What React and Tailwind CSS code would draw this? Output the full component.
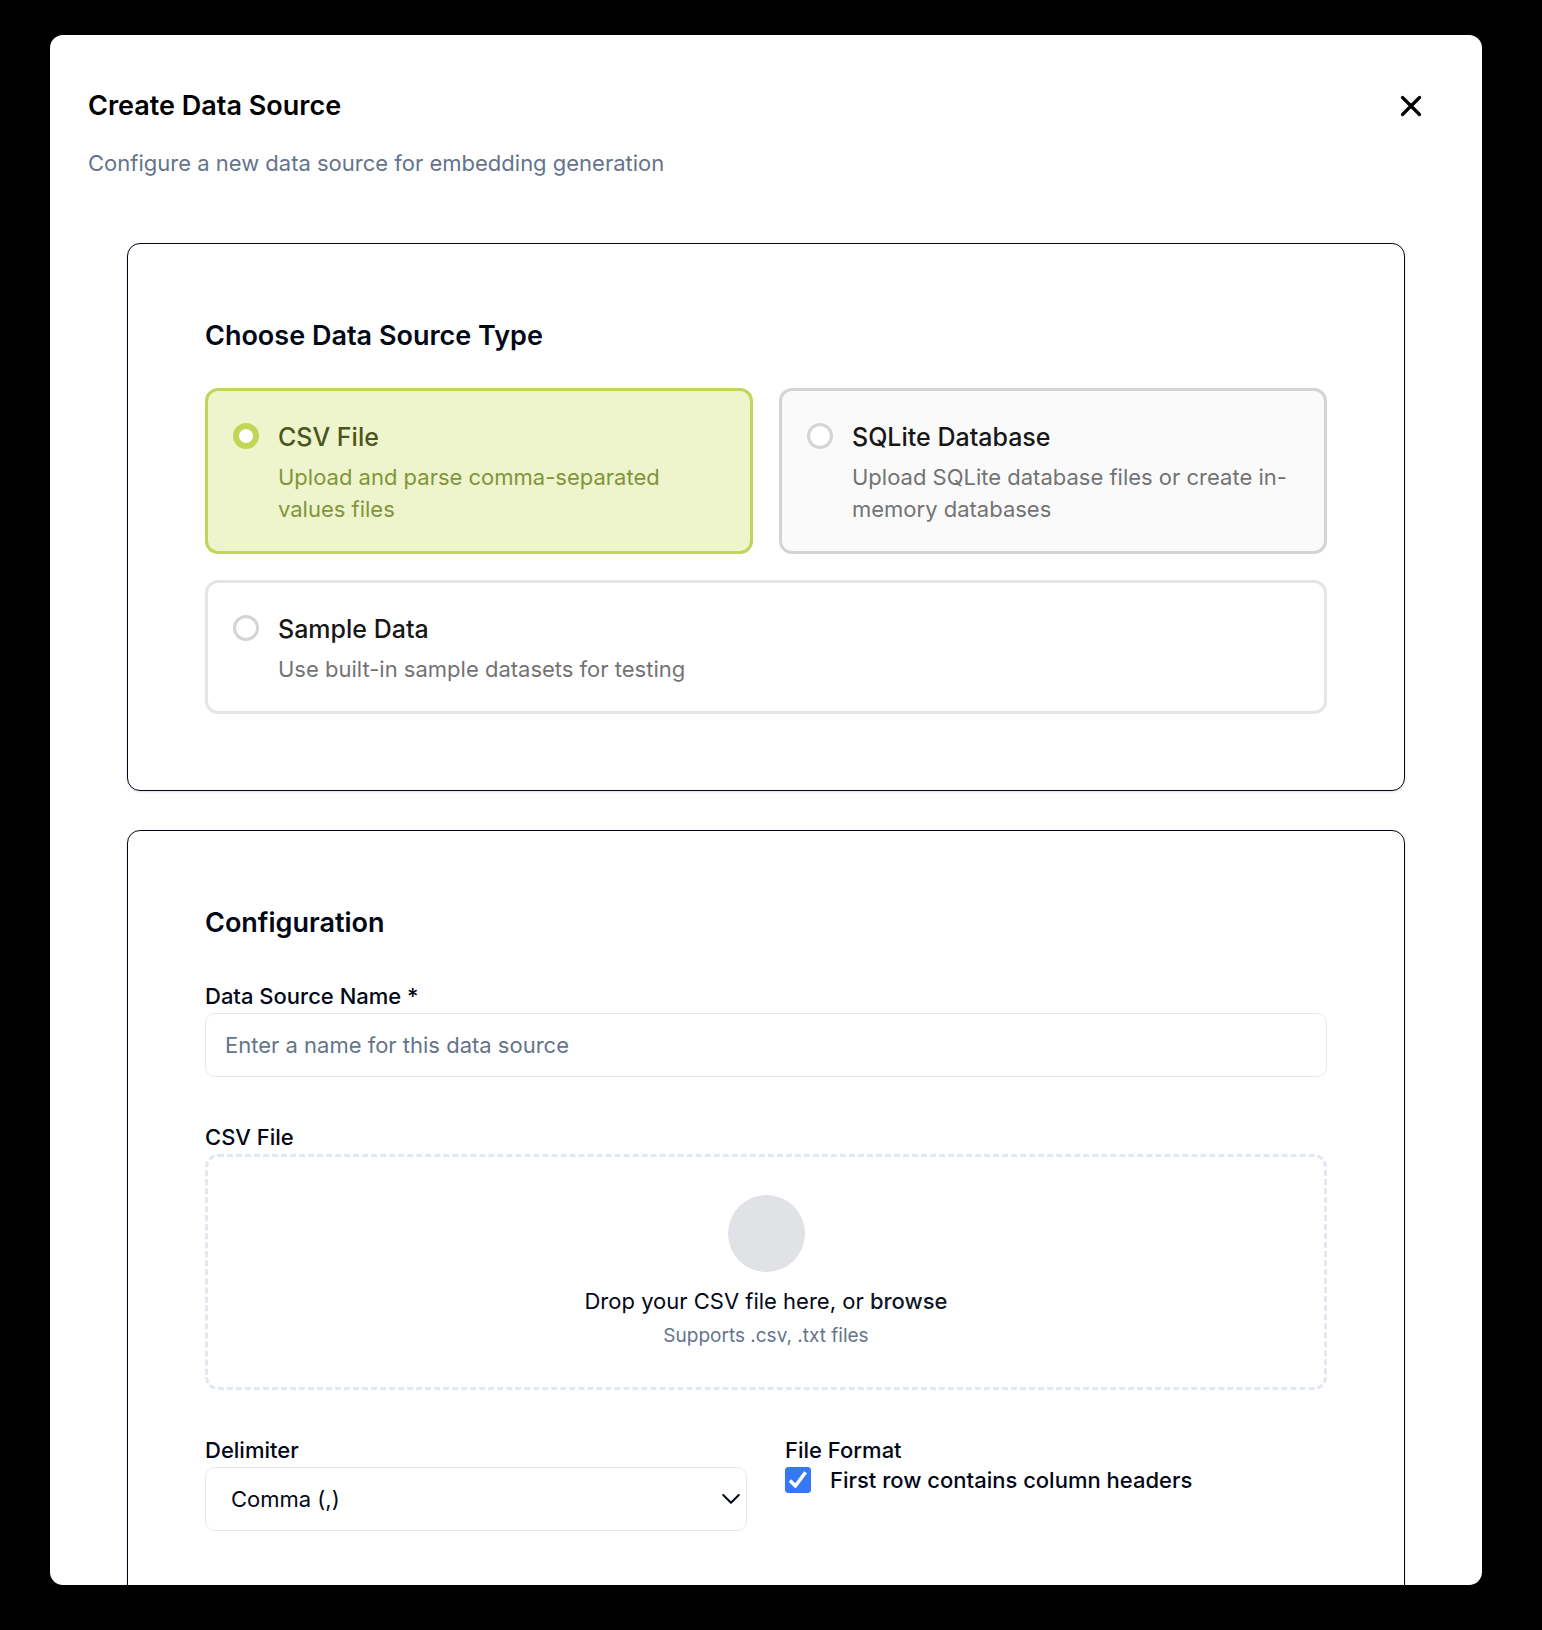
import { useState } from "react";
import { X } from "lucide-react";

const SOURCE_TYPES = [
  {
    id: "csv",
    title: "CSV File",
    description: "Upload and parse comma-separated values files",
    idle: "border-[#d4d4d4] bg-[#fafafa]",
  },
  {
    id: "sqlite",
    title: "SQLite Database",
    description: "Upload SQLite database files or create in-memory databases",
    idle: "border-[#d4d4d4] bg-[#fafafa]",
  },
  {
    id: "sample",
    title: "Sample Data",
    description: "Use built-in sample datasets for testing",
    idle: "border-[#e5e5e5] bg-white col-span-2",
  },
];

const LABEL = "pb-0.5 leading-[30px] font-medium";

function Card({ title, children }) {
  return (
    <section className="rounded-[13px] border border-[#020817] bg-white px-[77px] pt-[77px] pb-[76px] shadow-sm">
      <h3 className="text-[27px] leading-[30px] font-semibold">{title}</h3>
      {children}
    </section>
  );
}

function SourceOption({ option, checked, onSelect }) {
  const tone = checked ? "border-[#c1d656] bg-[#eef4cc]" : option.idle;
  return (
    <label className={`flex items-start gap-[19px] rounded-[13px] border-3 px-[25px] py-[26px] ${tone}`}>
      <input
        type="radio"
        name="source-type"
        checked={checked}
        onChange={onSelect}
        className="mt-1.5 size-[26px] shrink-0 appearance-none rounded-full border-3 border-[#d4d4d4] bg-white checked:border-[6px] checked:border-[#c1d656]"
      />
      <span className="flex flex-col gap-1">
        <span className={`text-[25px] leading-10 font-medium ${checked ? "text-[#4a561d]" : "text-[#171717]"}`}>
          {option.title}
        </span>
        <span className={`text-[22px] leading-8 ${checked ? "text-[#82953a]" : "text-[#737373]"}`}>
          {option.description}
        </span>
      </span>
    </label>
  );
}

export default function App() {
  const [type, setType] = useState("csv");
  const [headers, setHeaders] = useState(true);

  return (
    <div className="h-screen bg-black pt-[35px] pr-[60px] pb-[45px] pl-[50px] font-['Inter',sans-serif] text-[22px] leading-8 text-[#020817]">
      <div role="dialog" aria-labelledby="dialog-title" className="h-full overflow-hidden rounded-[13px] bg-white">
        <header className="pt-[54px] pr-[54px] pl-[38px]">
          <div className="flex items-center justify-between">
            <h2 id="dialog-title" className="text-[27px] leading-[30px] font-semibold text-black">
              Create Data Source
            </h2>
            <button type="button" aria-label="Close" className="text-black">
              <X size={34} strokeWidth={2.3} />
            </button>
          </div>
          <p className="mt-6 text-[#64748b]">Configure a new data source for embedding generation</p>
        </header>

        <form className="flex flex-col gap-[39px] px-[77px] pt-16">
          <Card title="Choose Data Source Type">
            <div className="mt-[37px] grid grid-cols-2 gap-[26px]">
              {SOURCE_TYPES.map((option) => (
                <SourceOption
                  key={option.id}
                  option={option}
                  checked={type === option.id}
                  onSelect={() => setType(option.id)}
                />
              ))}
            </div>
          </Card>

          <Card title="Configuration">
            <div className="mt-[43px] flex flex-col gap-[45px]">
              <div className="flex flex-col">
                <label htmlFor="source-name" className={LABEL}>
                  Data Source Name *
                </label>
                <input
                  id="source-name"
                  type="text"
                  placeholder="Enter a name for this data source"
                  className="h-16 w-full rounded-[10px] border border-[#e2e8f0] bg-white px-[19px] placeholder:text-[#64748b]"
                />
              </div>

              <div className="flex flex-col">
                <label htmlFor="csv-file" className={LABEL}>
                  CSV File
                </label>
                <label className="flex flex-col items-center rounded-[13px] border-3 border-dashed border-[#e2e8f0] py-[38px] text-center">
                  <input id="csv-file" type="file" accept=".csv,.txt" className="sr-only" />
                  <span className="size-[77px] rounded-full bg-[#e1e2e6]" />
                  <span className="mt-[13px]">
                    Drop your CSV file here, or <span className="font-medium text-[#0f172a]">browse</span>
                  </span>
                  <span className="mt-1.5 text-[19px] leading-[26px] text-[#64748b]">Supports .csv, .txt files</span>
                </label>
              </div>

              <div className="grid grid-cols-2 gap-[38px]">
                <div className="flex flex-col">
                  <label htmlFor="delimiter" className={LABEL}>
                    Delimiter
                  </label>
                  <div className="grid items-center">
                    <select
                      id="delimiter"
                      className="col-start-1 row-start-1 h-16 w-full appearance-none rounded-[10px] border border-[#e2e8f0] bg-white px-[25px]"
                    >
                      <option>Comma (,)</option>
                      <option>Semicolon (;)</option>
                      <option>Tab</option>
                    </select>
                    <svg
                      viewBox="0 0 18 12"
                      fill="none"
                      stroke="currentColor"
                      strokeWidth="2"
                      strokeLinecap="round"
                      strokeLinejoin="round"
                      className="pointer-events-none col-start-1 row-start-1 mr-[7px] h-3 w-[18px] justify-self-end"
                    >
                      <path d="M1.2 2 9 9.8 16.8 2" />
                    </svg>
                  </div>
                </div>

                <fieldset>
                  <legend className={LABEL}>File Format</legend>
                  <label className="flex items-center gap-[19px] leading-[26px] font-medium">
                    <span className="grid size-[26px] shrink-0">
                      <input
                        type="checkbox"
                        checked={headers}
                        onChange={(event) => setHeaders(event.target.checked)}
                        className="peer col-start-1 row-start-1 size-[26px] appearance-none rounded-[3px] border border-[#cbd5e1] bg-white checked:border-[#3478f6] checked:bg-[#3478f6]"
                      />
                      <svg
                        viewBox="0 0 26 26"
                        fill="none"
                        stroke="white"
                        strokeWidth="3.6"
                        strokeLinejoin="round"
                        className="pointer-events-none invisible col-start-1 row-start-1 size-[26px] peer-checked:visible"
                      >
                        <path d="M5 13.6 10.4 19 20.6 5.2" />
                      </svg>
                    </span>
                    First row contains column headers
                  </label>
                </fieldset>
              </div>
            </div>
          </Card>
        </form>
      </div>
    </div>
  );
}
